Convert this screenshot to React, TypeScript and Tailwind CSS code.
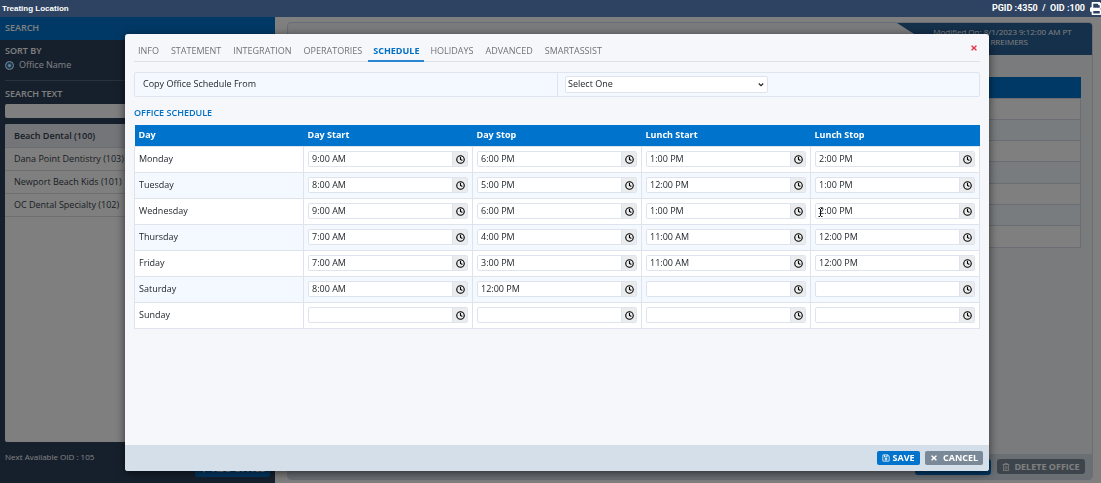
import { useState } from "react";
import { Clock } from "lucide-react";
import { FaPlus, FaPrint, FaRegSave, FaRegTrashAlt, FaTimes } from "react-icons/fa";

const tabs = ["INFO", "STATEMENT", "INTEGRATION", "OPERATORIES", "SCHEDULE", "HOLIDAYS", "ADVANCED", "SMARTASSIST"];

const offices = ["Beach Dental (100)", "Dana Point Dentistry (103)", "Newport Beach Kids (101)", "OC Dental Specialty (102)"];

const columns = ["Day Start", "Day Stop", "Lunch Start", "Lunch Stop"];

const schedule: { day: string; times: string[] }[] = [
  { day: "Monday", times: ["9:00 AM", "6:00 PM", "1:00 PM", "2:00 PM"] },
  { day: "Tuesday", times: ["8:00 AM", "5:00 PM", "12:00 PM", "1:00 PM"] },
  { day: "Wednesday", times: ["9:00 AM", "6:00 PM", "1:00 PM", "2:00 PM"] },
  { day: "Thursday", times: ["7:00 AM", "4:00 PM", "11:00 AM", "12:00 PM"] },
  { day: "Friday", times: ["7:00 AM", "3:00 PM", "11:00 AM", "12:00 PM"] },
  { day: "Saturday", times: ["8:00 AM", "12:00 PM", "", ""] },
  { day: "Sunday", times: ["", "", "", ""] },
];

function TopBar() {
  return (
    <header className="relative z-20 flex h-[17px] shrink-0 items-center justify-between overflow-hidden bg-[#2e4361] pl-0.5 font-bold text-white">
      <h1 className="font-['Liberation_Sans',sans-serif] text-[8px]">Treating Location</h1>
      <div className="flex items-center gap-[5px] font-[Roboto,sans-serif] text-[9px]">
        <span className="whitespace-pre">PGID :4350  /  OID :100</span>
        <button aria-label="Print" className="-mr-0.5">
          <FaPrint className="size-[13px]" />
        </button>
      </div>
    </header>
  );
}

function Sidebar() {
  return (
    <aside className="flex w-[275px] shrink-0 flex-col bg-[#2c405b] text-white">
      <h2 className="flex h-[23px] shrink-0 items-center bg-[#0073cc] pb-px pl-[5px] font-semibold">SEARCH</h2>
      <div className="flex flex-1 flex-col px-[5px] pb-1.5">
        <h3 className="mt-1.5 leading-[10px] font-semibold">SORT BY</h3>
        <label className="mt-1 flex items-center gap-[5px] leading-[10px]">
          <input
            type="radio"
            name="sort"
            defaultChecked
            className="size-[9px] appearance-none rounded-full border border-[#dbe9f4] bg-white shadow-[inset_0_0_0_2px_#1a78bd]"
          />
          Office Name
        </label>
        <hr className="mt-2.5 border-[#53657c]" />
        <label htmlFor="search-text" className="mt-2 leading-[10px] font-semibold">
          SEARCH TEXT
        </label>
        <input id="search-text" type="text" className="mt-[5px] h-[14px] rounded-[2px] bg-white" />
        <ul className="mt-1.5 flex-1 overflow-hidden rounded-[2px] bg-white text-[#333d48]">
          {offices.map((o, i) => (
            <li
              key={o}
              className={
                i === 0
                  ? "flex h-6 items-center border-b border-[#d5dae0] bg-[#e6ebf3] pl-[9px] font-semibold"
                  : "flex h-[23px] items-center border-b border-[#d9dce0] pl-[9px]"
              }
            >
              {o}
            </li>
          ))}
        </ul>
        <div className="mt-[9px] flex items-start justify-between">
          <p className="text-[8px] leading-3">Next Available OID : 105</p>
          <button className="mt-2.5 flex h-4 w-[75px] items-center justify-center gap-1 rounded-[3px] bg-[#0073cc] font-bold">
            <FaPlus className="size-2" />
            ADD OFFICE
          </button>
        </div>
      </div>
    </aside>
  );
}

function OfficePanel() {
  return (
    <main className="flex flex-1 flex-col bg-white pt-[5px] pr-2 pb-[3px] pl-3">
      <section className="flex flex-1 flex-col overflow-hidden rounded-[4px] border border-[#d5dbe6] bg-[#f5f7fa]">
        <div className="flex justify-end">
          <p className="flex h-8 w-[195px] justify-center bg-[#286096] pt-1 pl-4 text-center text-[8px] leading-[10px] text-white [clip-path:polygon(0_0,100%_0,100%_100%,50px_100%)]">
            Modified On: 8/1/2023 9:12:00 AM PT
            <br />
            By: RREIMERS
          </p>
        </div>
        <div className="mx-[11px] mt-[22px] flex flex-col">
          <div className="h-[21px] bg-[#0073cc]" />
          <div className="grid h-[150px] grid-rows-7 divide-y divide-[#d5dbe6] border border-[#d5dbe6]">
            {schedule.map((row, i) => (
              <div key={row.day} className={i % 2 ? "bg-[#f2f9ff]" : "bg-white"} />
            ))}
          </div>
        </div>
        <footer className="mt-auto flex h-[25px] items-center justify-end gap-1.5 bg-[#d5dfe9] pr-[7px] font-bold text-white">
          <button aria-label="Save office" className="h-4 w-[76px] rounded-[3px] bg-[#0073cc]" />
          <button className="flex h-[15px] w-[88px] items-center justify-center gap-1 rounded-[3px] bg-[#7a8998]">
            <FaRegTrashAlt className="size-2" />
            DELETE OFFICE
          </button>
        </footer>
      </section>
    </main>
  );
}

function TimeField({ label, value }: { label: string; value: string }) {
  return (
    <div className="flex h-4 overflow-hidden rounded-[2px] border border-[#dfe3ee] bg-white">
      <input aria-label={label} defaultValue={value} className="min-w-0 flex-1 pb-px pl-[3px] outline-none" />
      <button
        aria-label={"Pick " + label}
        className="flex w-[15px] items-center justify-center border-l border-[#dfe3ee] bg-[#ebecee] text-black"
      >
        <Clock className="size-[9px]" strokeWidth={3} />
      </button>
    </div>
  );
}

function ScheduleDialog() {
  const [active, setActive] = useState("SCHEDULE");
  return (
    <div className="fixed inset-0 z-30 flex pt-[34px] pr-28 pb-3 pl-[125px]">
      <div
        role="dialog"
        aria-label="Office schedule"
        className="relative flex flex-1 flex-col overflow-hidden rounded-[3px] bg-[#f5f7fa] shadow-[0_2px_10px_rgba(0,0,0,0.6)]"
      >
        <button aria-label="Close" className="absolute top-[10px] right-[11px] text-[#e8394a]">
          <FaTimes className="size-2" />
        </button>
        <div className="flex flex-1 flex-col px-[9px] pt-[7px]">
          <nav className="flex border-b border-[#dde2e9]">
            {tabs.map((t) => (
              <button
                key={t}
                onClick={() => setActive(t)}
                className={
                  t === active
                    ? "-mb-px h-[21px] border-b-2 border-[#2a86d1] px-[5px] font-bold text-[#0070c5] first:pl-1"
                    : "-mb-px h-[21px] border-b-2 border-transparent px-1.5 text-[#6f747a] first:pl-1"
                }
              >
                {t}
              </button>
            ))}
          </nav>
          <div className="mt-2.5 grid h-[25px] shrink-0 grid-cols-2 rounded-[2px] border border-[#dfe5ee] bg-[#f3f9ff]">
            <label htmlFor="copy-from" className="flex items-center pb-0.5 pl-2">
              Copy Office Schedule From
            </label>
            <div className="flex items-center border-l border-[#dfe5ee] pb-px pl-[7px]">
              <div className="relative w-[203px]">
                <select
                  id="copy-from"
                  className="block h-[17px] w-full appearance-none rounded-[2px] border border-[#dfe3ee] bg-white pb-0.5 pl-[2px]"
                >
                  <option>Select One</option>
                </select>
                <svg viewBox="0 0 8 6" className="pointer-events-none absolute top-1.5 right-[3px] h-1.5 w-2">
                  <path d="M1.8 1.5 4 3.7 6.2 1.5" fill="none" stroke="#222" strokeWidth="1.1" />
                </svg>
              </div>
            </div>
          </div>
          <h2 className="mt-[11px] leading-[10px] font-semibold text-[#0070c5]">OFFICE SCHEDULE</h2>
          <table className="mt-[7px] w-full table-fixed border-collapse">
            <thead>
              <tr className="h-[21px] bg-[#0073cc] text-left text-white">
                <th className="pb-px pl-1 font-bold">Day</th>
                {columns.map((c) => (
                  <th key={c} className="pb-px pl-1 font-bold">
                    {c}
                  </th>
                ))}
              </tr>
            </thead>
            <tbody>
              {schedule.map((row) => (
                <tr key={row.day} className="h-[26px] bg-white even:bg-[#f3f9ff]">
                  <th className="border border-[#dfe3ee] pl-1 text-left font-normal">{row.day}</th>
                  {row.times.map((t, i) => (
                    <td key={columns[i]} className="border border-[#dfe3ee] px-1">
                      <TimeField label={row.day + " " + columns[i]} value={t} />
                    </td>
                  ))}
                </tr>
              ))}
            </tbody>
          </table>
        </div>
        <footer className="flex h-[26px] shrink-0 items-center justify-end gap-[5px] bg-[#d5dfe9] pr-1.5 font-bold text-white">
          <button className="flex h-[14px] w-[43px] items-center justify-center gap-0.5 rounded-[2px] bg-[#0073cc]">
            <FaRegSave className="size-2" />
            SAVE
          </button>
          <button className="flex h-[14px] w-[58px] items-center justify-center gap-[5px] rounded-[2px] bg-[#7a8998]">
            <FaTimes className="size-2" />
            CANCEL
          </button>
        </footer>
      </div>
      <svg viewBox="0 0 5 9" className="pointer-events-none absolute top-[208px] left-[818px] h-[9px] w-[5px]">
        <path d="M.5.5H2M3 .5h1.500M2.500 1v7M.5 8.500H2M3 8.500h1.500" fill="none" stroke="#111" />
      </svg>
    </div>
  );
}

export default function App() {
  return (
    <div className="flex h-screen flex-col overflow-hidden font-['Open_Sans',sans-serif] text-[9px] text-[#23282e]">
      <TopBar />
      <div className="relative flex flex-1">
        <Sidebar />
        <OfficePanel />
        <div className="absolute inset-0 bg-black/50" />
      </div>
      <ScheduleDialog />
    </div>
  );
}
